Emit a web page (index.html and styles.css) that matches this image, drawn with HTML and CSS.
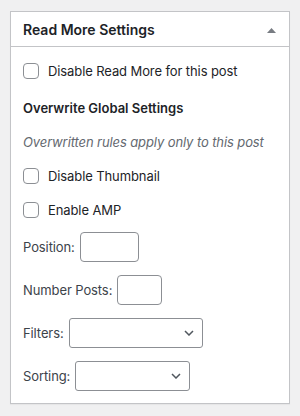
FILE: index.html
```html
<!DOCTYPE html>
<html lang="en">
<head>
    <meta charset="UTF-8">
    <meta name="viewport" content="width=device-width, initial-scale=1.0">
    <title>Read More Settings</title>
    <link rel="stylesheet" href="styles.css">
</head>
<body>
    <div class="postbox">
        <div class="postbox-header">
            <h2>Read More Settings</h2>
            <svg class="toggle" width="9" height="5" viewBox="0 0 9 5">
                <path d="M0 5 L4.5 0 L9 5 Z" fill="#787c82"/>
            </svg>
        </div>
        <div class="inside">
            <label class="row check-row first">
                <span class="checkbox"></span>
                Disable Read More for this post
            </label>

            <div class="row heading">Overwrite Global Settings</div>
            <div class="row note">Overwritten rules apply only to this post</div>

            <label class="row check-row">
                <span class="checkbox"></span>
                Disable Thumbnail
            </label>
            <label class="row check-row">
                <span class="checkbox"></span>
                Enable AMP
            </label>

            <div class="field first-field">
                <label>Position:</label>
                <input type="text" class="input-pos">
            </div>
            <div class="field">
                <label>Number Posts:</label>
                <input type="text" class="input-num">
            </div>
            <div class="field">
                <label>Filters:</label>
                <div class="select select-filters">
                    <svg width="10" height="6" viewBox="0 0 10 6"><path d="M1 1 L5 5 L9 1" fill="none" stroke="#50575e" stroke-width="1.5"/></svg>
                </div>
            </div>
            <div class="field">
                <label>Sorting:</label>
                <div class="select select-sorting">
                    <svg width="10" height="6" viewBox="0 0 10 6"><path d="M1 1 L5 5 L9 1" fill="none" stroke="#50575e" stroke-width="1.5"/></svg>
                </div>
            </div>
        </div>
    </div>
</body>
</html>
```

FILE: styles.css
```css
body {
    font-family: Inter, Roboto, "Liberation Sans", sans-serif;
    font-size: 13px;
    letter-spacing: -0.1px;
    color: #1d2327;
    background-color: #f0f0f1;
    margin: 0;
    padding: 11px 10px;
}

.postbox {
    width: 280px;
    box-sizing: border-box;
    background-color: #ffffff;
    border: 1px solid #c3c4c7;
    box-shadow: 0 1px 1px rgba(0, 0, 0, 0.04);
}

.postbox-header {
    height: 34px;
    border-bottom: 1px solid #c3c4c7;
    display: flex;
    align-items: center;
    justify-content: space-between;
    padding: 0 13px 0 12px;
}

.postbox-header h2 {
    margin: 0;
    font-size: 14px;
    font-weight: 600;
    letter-spacing: 0;
}

.toggle {
    display: block;
    margin-top: 3px;
}

.inside {
    padding: 14px 12px 12px;
    display: flex;
    flex-direction: column;
}

.row {
    height: 20px;
    display: flex;
    align-items: center;
}

.check-row {
    margin-top: 14px;
}

.check-row.first {
    margin-top: 0;
}

.checkbox {
    width: 16px;
    height: 16px;
    box-sizing: border-box;
    border: 1px solid #8c8f94;
    border-radius: 4px;
    margin-right: 9px;
    flex-shrink: 0;
}

.heading {
    margin-top: 17px;
    font-weight: 600;
    letter-spacing: 0;
}

.note {
    margin-top: 14px;
    font-style: italic;
    color: #646970;
}

.field {
    margin-top: 13px;
    display: flex;
    align-items: center;
    gap: 5px;
    height: 30px;
}

.field.first-field {
    margin-top: 12px;
}

.field label {
    color: #3c434a;
}

input {
    height: 30px;
    box-sizing: border-box;
    border: 1px solid #8c8f94;
    border-radius: 4px;
    padding: 0 8px;
    margin: 0;
    font: inherit;
}

.input-pos {
    width: 59px;
}

.input-num {
    width: 45px;
}

.select {
    position: relative;
    height: 30px;
    box-sizing: border-box;
    border: 1px solid #8c8f94;
    border-radius: 3px;
}

.select svg {
    position: absolute;
    right: 8px;
    top: 11px;
}

.select-filters {
    width: 134px;
}

.select-sorting {
    width: 115px;
}
```
